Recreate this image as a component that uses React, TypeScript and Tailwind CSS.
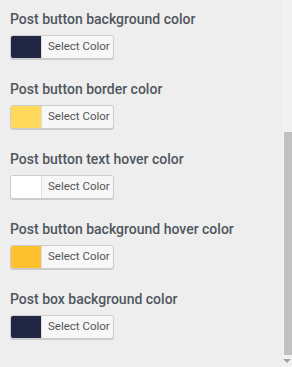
const rows = [
  { label: "Post button background color", color: "bg-[#222645]" },
  { label: "Post button border color", color: "bg-[#ffd85c]" },
  { label: "Post button text hover color", color: "bg-white" },
  { label: "Post button background hover color", color: "bg-[#fdc02f]" },
  { label: "Post box background color", color: "bg-[#222645]" },
];

const ColorRow = ({ label, color }: { label: string; color: string }) => (
  <div className="flex flex-col gap-[7px]">
    <span className="text-[14px] leading-[18px] font-medium text-[#50575e] whitespace-nowrap">
      {label}
    </span>
    <button className="flex w-[104px] h-[24px] items-stretch rounded-[3px] border border-[#cccccc] bg-[#f7f7f7] shadow-[0_1px_0_#cccccc] overflow-hidden p-0">
      <span className={`w-[31px] border-r border-[#dddddd] ${color}`}></span>
      <span className="flex-1 flex items-center pl-[6px] text-[11.5px] text-[#555555]">
        Select Color
      </span>
    </button>
  </div>
);

export default function App() {
  return (
    <div
      className="w-[292px] h-[367px] flex bg-[#eeeeee] overflow-hidden"
      style={{ fontFamily: "Roboto, 'Liberation Sans', sans-serif" }}
    >
      <div className="flex-1 flex flex-col gap-[21px] pl-[10px] pt-[10px]">
        {rows.map((r) => (
          <ColorRow key={r.label} label={r.label} color={r.color} />
        ))}
      </div>
      <div className="w-[10px] flex flex-col bg-[#f1f1f1]">
        <div className="h-[132px]"></div>
        <div className="h-[223px] ml-[2px] bg-[#c1c1c1]"></div>
        <div className="flex-1 flex items-center justify-center">
          <div className="w-0 h-0 border-l-[4px] border-r-[4px] border-t-[4px] border-l-transparent border-r-transparent border-t-[#a3a3a3]"></div>
        </div>
      </div>
    </div>
  );
}
